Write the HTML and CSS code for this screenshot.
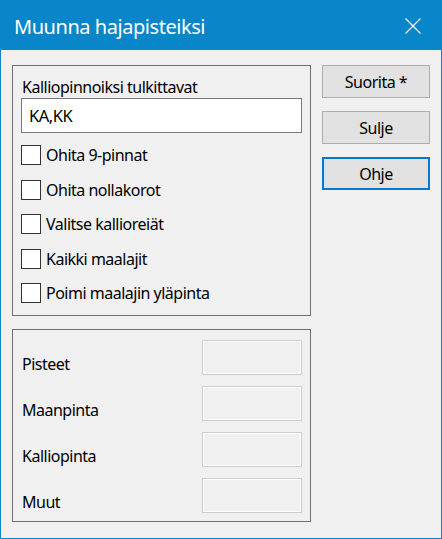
FILE: index.html
```html
<!DOCTYPE html>
<html lang="fi">
<head>
<meta charset="utf-8">
<title>Muunna hajapisteiksi</title>
<link rel="stylesheet" href="styles.css">
</head>
<body>
<div class="window">
  <div class="titlebar">
    <span class="title">Muunna hajapisteiksi</span>
    <svg class="close" width="16" height="16" viewBox="0 0 16 16" aria-hidden="true">
      <path d="M0.5 0.5 L15.5 15.5 M15.5 0.5 L0.5 15.5" stroke="#ffffff" stroke-width="1.1" fill="none"/>
    </svg>
  </div>
  <div class="content">
    <div class="left">
      <div class="group group-top">
        <div class="field-label">Kalliopinnoiksi tulkittavat</div>
        <div class="textbox">KA,KK</div>
        <div class="checks">
          <div class="check"><span class="box"></span><span>Ohita 9-pinnat</span></div>
          <div class="check"><span class="box"></span><span>Ohita nollakorot</span></div>
          <div class="check"><span class="box"></span><span>Valitse kallioreiät</span></div>
          <div class="check"><span class="box"></span><span>Kaikki maalajit</span></div>
          <div class="check"><span class="box"></span><span>Poimi maalajin yläpinta</span></div>
        </div>
      </div>
      <div class="group group-bottom">
        <div class="stat"><span class="stat-label">Pisteet</span><span class="stat-value"></span></div>
        <div class="stat"><span class="stat-label">Maanpinta</span><span class="stat-value"></span></div>
        <div class="stat"><span class="stat-label">Kalliopinta</span><span class="stat-value"></span></div>
        <div class="stat"><span class="stat-label">Muut</span><span class="stat-value"></span></div>
      </div>
    </div>
    <div class="buttons">
      <div class="btn">Suorita *</div>
      <div class="btn">Sulje</div>
      <div class="btn btn-default">Ohje</div>
    </div>
  </div>
</div>
</body>
</html>
```
FILE: styles.css
```css
* { box-sizing: border-box; }

html, body {
  margin: 0;
  padding: 0;
  background: #f0f0f0;
}

body {
  font-family: "Noto Sans", "Open Sans", sans-serif;
  font-size: 16px;
  letter-spacing: -0.5px;
  color: #000;
}

.window {
  width: 442px;
  height: 539px;
  border: 1px solid #0986c9;
  background: #f0f0f0;
  display: flex;
  flex-direction: column;
}

.titlebar {
  height: 49px;
  background: #0986c9;
  display: flex;
  align-items: center;
  justify-content: space-between;
  padding: 2px 20px 0 13px;
  flex: none;
}

.title {
  color: #ffffff;
  font-size: 20px;
  line-height: 26px;
  letter-spacing: -0.45px;
}

.close {
  display: block;
  margin-top: -2px;
}

.content {
  display: flex;
  gap: 11px;
  padding: 15px 11px 0 11px;
}

.left {
  width: 299px;
  display: flex;
  flex-direction: column;
  gap: 13px;
}

.group {
  border: 1px solid #6f6f6f;
}

.group-top {
  height: 251px;
  padding: 11px 8px 0 8px;
}

.field-label {
  line-height: 20px;
  margin-left: 1px;
}

.textbox {
  margin-top: 1px;
  height: 35px;
  background: #ffffff;
  border: 1px solid #7a7a7a;
  padding: 0 7px;
  line-height: 33px;
  font-size: 16.5px;
}

.checks {
  margin-top: 12px;
  display: flex;
  flex-direction: column;
  gap: 14.5px;
}

.check {
  display: flex;
  align-items: center;
  gap: 5px;
  height: 20px;
  line-height: 20px;
}

.box {
  width: 20px;
  height: 20px;
  background: #ffffff;
  border: 1px solid #333333;
  flex: none;
}

.group-bottom {
  height: 193px;
  padding: 10px 8px 8px 9px;
  display: flex;
  flex-direction: column;
  gap: 11px;
}

.stat {
  display: flex;
  align-items: flex-end;
  justify-content: space-between;
  height: 35px;
}

.stat-label {
  line-height: 20px;
  margin-bottom: 1px;
}

.stat-value {
  width: 100px;
  height: 35px;
  border: 1px solid #cccccc;
  box-shadow: inset 0 0 0 1px #ffffff;
}

.buttons {
  width: 108px;
  display: flex;
  flex-direction: column;
  gap: 13px;
}

.btn {
  height: 33px;
  background: #e1e1e1;
  border: 1px solid #adadad;
  display: flex;
  align-items: center;
  justify-content: center;
  line-height: 20px;
}

.btn-default {
  border: 2px solid #0078d7;
}
```
